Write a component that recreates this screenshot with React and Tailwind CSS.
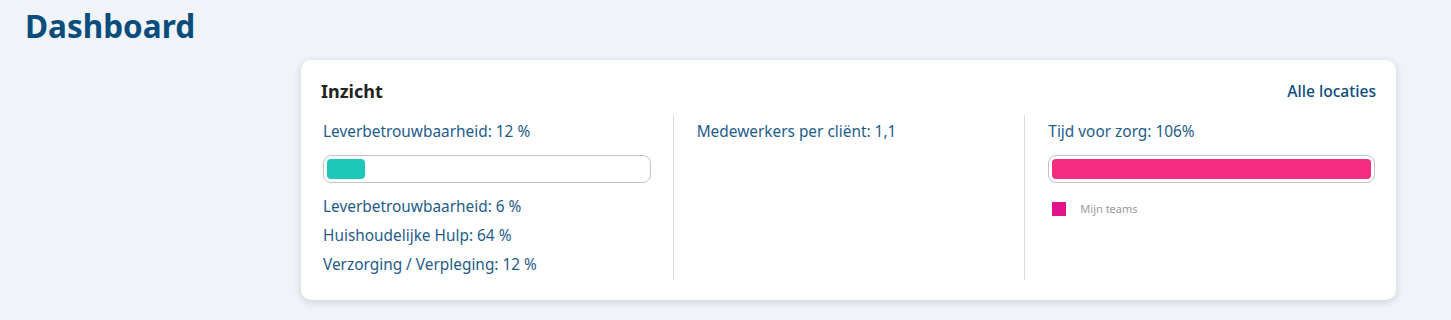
import React from 'react';

const font = { fontFamily: '"Noto Sans", "Open Sans", sans-serif' };

function ProgressBar({ percent, color }) {
  return (
    <div className="h-[28px] w-full rounded-[8px] border border-[#c4c4c4] bg-white p-[3px]">
      <div className={`h-full rounded-[4px] ${color}`} style={{ width: `${percent}%` }} />
    </div>
  );
}

export default function App() {
  return (
    <div className="min-h-[320px] bg-[#f0f4f8] pl-[25px] pt-[6px]" style={font}>
      <h1 className="text-[31.5px] font-bold leading-[40px] text-[#0a4d7d]">Dashboard</h1>

      <div className="ml-[276px] mr-[55px] mt-[14px] rounded-[10px] bg-white px-[20px] pb-[20px] pt-[18px] shadow-[0_2px_8px_rgba(0,0,0,0.15)]">
        <div className="flex items-center justify-between">
          <h2 className="text-[18px] font-bold leading-[26px] text-[#222222]">Inzicht</h2>
          <a className="text-[15.6px] font-medium leading-[26px] text-[#0a4d7d]">Alle locaties</a>
        </div>

        <div className="mt-[11px] grid grid-cols-3 text-[15.4px] leading-[20px] text-[#1e5c8a]">
          <div className="pb-[5px] pl-[2px] pr-[22px] pt-[7px]">
            <p>Leverbetrouwbaarheid: 12 %</p>
            <div className="mt-[13px]">
              <ProgressBar percent={12} color="bg-[#1dc8b9]" />
            </div>
            <p className="mt-[14px]">Leverbetrouwbaarheid: 6 %</p>
            <p className="mt-[9px]">Huishoudelijke Hulp: 64 %</p>
            <p className="mt-[9px]">Verzorging / Verpleging: 12 %</p>
          </div>

          <div className="border-l border-[#dcdcdc] pl-[23px] pr-[1px] pt-[7px]">
            <p>Medewerkers per cliënt: 1,1</p>
          </div>

          <div className="border-l border-[#dcdcdc] pl-[23px] pr-[1px] pt-[7px]">
            <p>Tijd voor zorg: 106%</p>
            <div className="mt-[13px]">
              <ProgressBar percent={100} color="bg-[#f42d83]" />
            </div>
            <div className="mt-[19px] flex items-center pl-[4px]">
              <span className="h-[14px] w-[14px] bg-[#e0148c]" />
              <span className="ml-[14px] text-[11px] leading-[14px] text-[#9a9a9a]">Mijn teams</span>
            </div>
          </div>
        </div>
      </div>
    </div>
  );
}
